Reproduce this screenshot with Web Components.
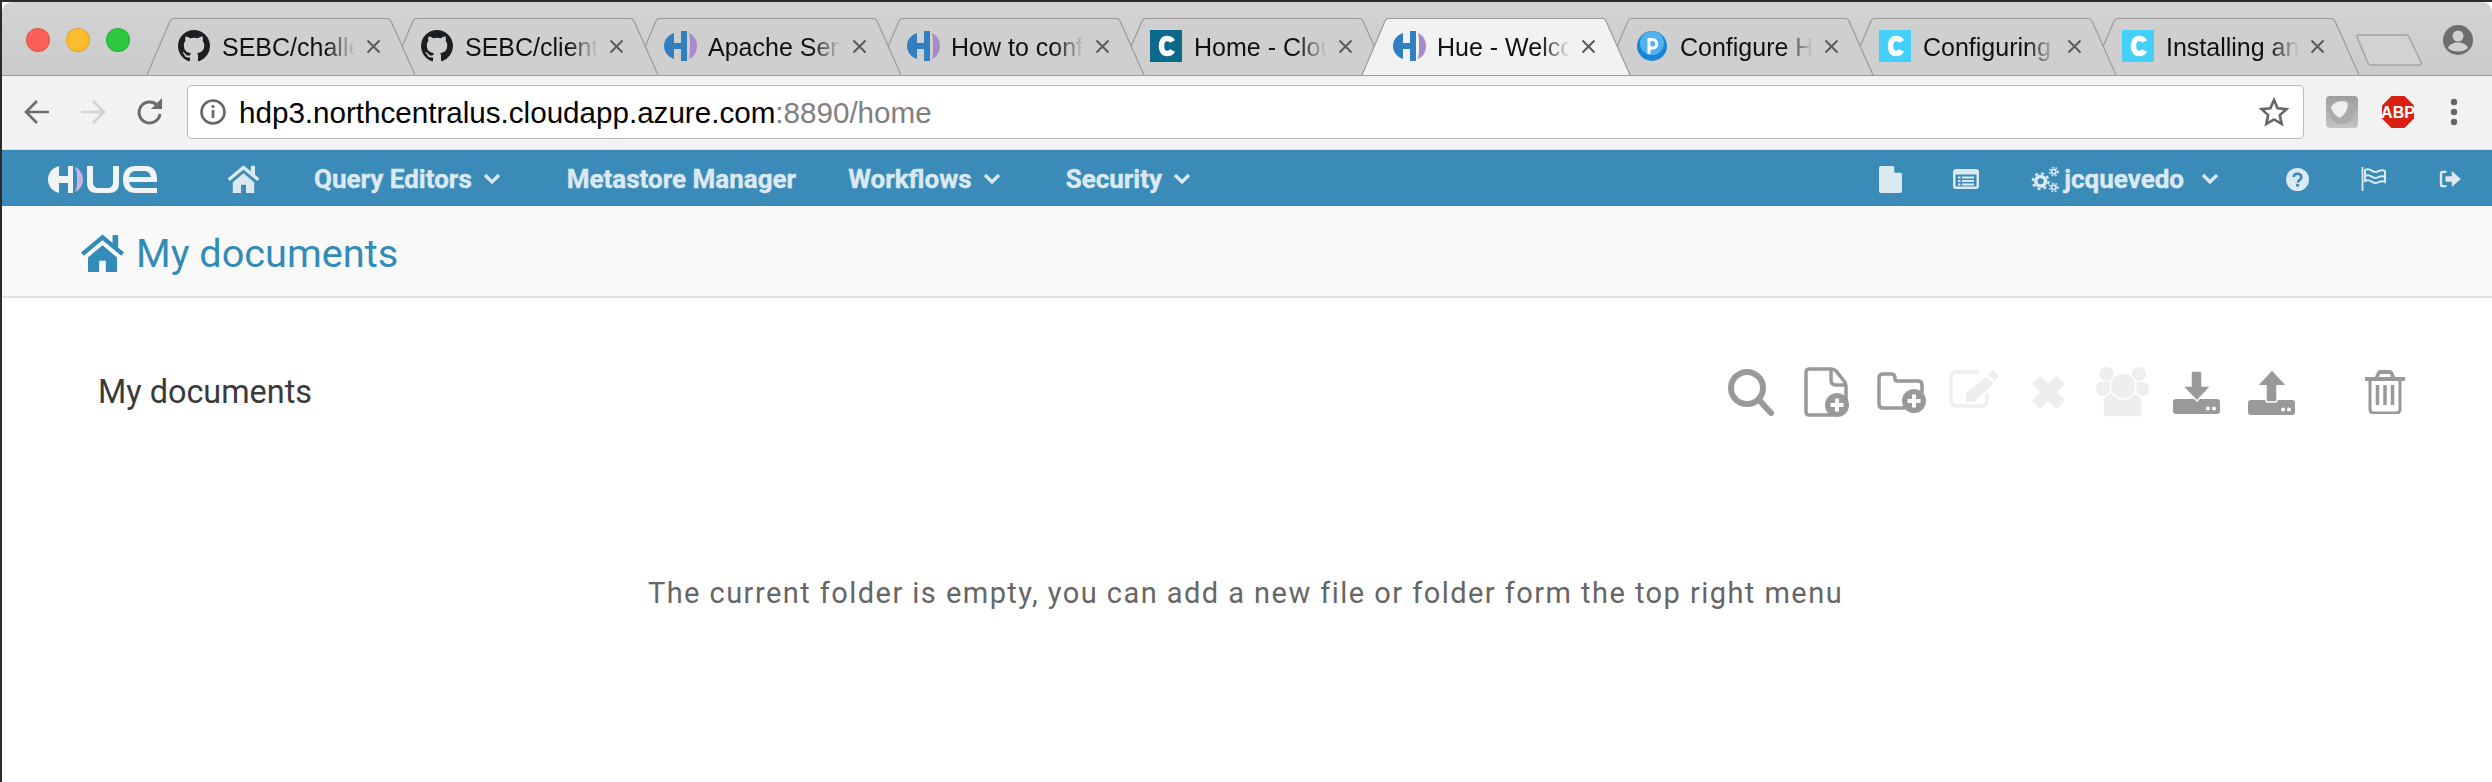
<!doctype html>
<html>
<head>
<meta charset="utf-8">
<title>Hue - Welcome</title>
<style>
  html, body { margin: 0; padding: 0; background: #fff; }
  body { width: 2492px; height: 782px; overflow: hidden; font-family: Roboto, "Liberation Sans", sans-serif; }
</style>
</head>
<body>
<browser-window>
  <browser-tabs>
    <browser-tab icon="github">SEBC/challenges</browser-tab>
    <browser-tab icon="github">SEBC/clients</browser-tab>
    <browser-tab icon="hue">Apache Sentry</browser-tab>
    <browser-tab icon="hue">How to configure</browser-tab>
    <browser-tab icon="cloudera">Home - Cloudera</browser-tab>
    <browser-tab icon="hue" active>Hue - Welcome</browser-tab>
    <browser-tab icon="p">Configure Hue</browser-tab>
    <browser-tab icon="c">Configuring Hue</browser-tab>
    <browser-tab icon="c">Installing and</browser-tab>
  </browser-tabs>
  <browser-toolbar host-name="hdp3.northcentralus.cloudapp.azure.com" rest=":8890/home"></browser-toolbar>
  <hue-nav></hue-nav>
  <page-title>My documents</page-title>
  <doc-panel heading="My documents">The current folder is empty, you can add a new file or folder form the top right menu</doc-panel>
</browser-window>

<script>
const letterC = `<path d="M22.500 11.500C21.500 9.500 19.500 8.500 17 8.500c-3.500 0-5.500 3-5.500 7.500s2 7.500 5.500 7.500c2.500 0 4.500-1 5.500-3" fill="none" stroke="#fff" stroke-width="5.500"/>`;

const ICONS = {
  github: `<svg viewBox="0 0 16 16" width="32" height="32"><path fill="#1b1f23" d="M8 0C3.58 0 0 3.58 0 8c0 3.54 2.29 6.53 5.47 7.59.4.07.55-.17.55-.38 0-.19-.01-.82-.01-1.49-2.01.37-2.53-.49-2.69-.94-.09-.23-.48-.94-.82-1.13-.28-.15-.68-.52-.01-.53.63-.01 1.08.58 1.23.82.72 1.21 1.87.87 2.33.66.07-.52.28-.87.51-1.07-1.78-.2-3.64-.89-3.64-3.95 0-.87.31-1.59.82-2.15-.08-.2-.36-1.02.08-2.12 0 0 .67-.21 2.2.82.64-.18 1.32-.27 2-.27s1.36.09 2 .27c1.53-1.04 2.2-.82 2.2-.82.44 1.1.16 1.92.08 2.12.51.56.82 1.27.82 2.15 0 3.07-1.87 3.75-3.65 3.95.29.25.54.73.54 1.48 0 1.07-.01 1.93-.01 2.2 0 .21.15.46.55.38A8.01 8.01 0 0 0 16 8c0-4.42-3.58-8-8-8z"/></svg>`,
  hue: `<svg viewBox="0 0 33 32" width="33" height="32"><path d="M10 3C4 5 0 10 0 16s4 11 10 13V19h7v12h6V1h-6v12h-7z" fill="#2f7fc1"/><path d="M25 3c5 2 8 7 8 13s-3 11-8 13c1-4 1-9 1-13s0-9-1-13z" fill="#a98bc9"/></svg>`,
  cloudera: `<svg viewBox="0 0 32 32" width="32" height="32"><rect width="32" height="32" fill="#0b6a8a"/>${letterC}</svg>`,
  p: `<svg viewBox="0 0 32 32" width="32" height="32"><circle cx="16" cy="16" r="15" fill="#1c86d6"/><circle cx="16" cy="13" r="12" fill="#4fb3f0"/><path d="M13 24V9.500h3.500a4.300 4.300 0 0 1 0 8.600H13" fill="none" stroke="#fff" stroke-width="3"/></svg>`,
  c: `<svg viewBox="0 0 32 32" width="32" height="32"><rect width="32" height="32" fill="#45d0fb"/>${letterC}</svg>`
};

class BrowserWindow extends HTMLElement {
  constructor() {
    super();
    this.attachShadow({ mode: 'open' }).innerHTML = `
      <style>
        :host { display: block; border-top: 2px solid #2b2b2b; border-left: 2px solid #2b2b2b; box-sizing: border-box; height: 782px; background: #fff; }
      </style>
      <slot></slot>`;
  }
}

class BrowserTabs extends HTMLElement {
  constructor() {
    super();
    this.attachShadow({ mode: 'open' }).innerHTML = `
      <style>
        :host { display: block; position: relative; height: 74px; box-sizing: border-box; background: linear-gradient(#d3d3d3, #cbcbcb); border-bottom: 1px solid #9b9b9b; border-radius: 10px 10px 0 0; }
        .row { display: flex; align-items: flex-end; height: 73px; padding-left: 144px; padding-right: 19px; box-sizing: border-box; }
        .lights { position: absolute; left: 24px; top: 26px; display: flex; gap: 16px; }
        .lights i { width: 24px; height: 24px; border-radius: 50%; box-sizing: border-box; border: 1px solid rgba(0,0,0,.12); }
        .new { flex: none; margin-left: 23px; margin-bottom: 9px; }
        .me { flex: none; margin-left: auto; margin-bottom: 20px; }
      </style>
      <div class="lights"><i style="background:#fc5f57"></i><i style="background:#fdbc2e"></i><i style="background:#2bc840"></i></div>
      <div class="row"><slot></slot>
        <svg class="new" width="66" height="32" viewBox="0 0 66 32"><path d="M3 1h47q2 0 3 2l12 25q1 3-2 3H15q-2 0-3-2L1 3q-1-2 2-2z" fill="#d2d2d2" stroke="#a3a3a3" stroke-width="1.500"/></svg>
        <svg class="me" width="30" height="30" viewBox="0 0 30 30"><circle cx="15" cy="15" r="15" fill="#6e6e6e"/><circle cx="15" cy="11" r="5.500" fill="#d0d0d0"/><path d="M5 23c1.500-4 6-5.500 10-5.500s8.500 1.500 10 5.500c-2.500 2.500-6 3.500-10 3.500S7.500 25.500 5 23z" fill="#d0d0d0"/></svg>
      </div>`;
  }
}

class BrowserTab extends HTMLElement {
  connectedCallback() {
    if (this.shadowRoot) return;
    const active = this.hasAttribute('active');
    const fill = active ? '#f2f2f2' : '#cfcfcf';
    // earlier tabs sit over later ones, the active one over all of them
    const order = 20 - Array.from(this.parentNode.children).indexOf(this);
    this.attachShadow({ mode: 'open' }).innerHTML = `
      <style>
        :host { display: block; position: relative; width: 270px; height: 57px; margin-right: -27px; flex: none; z-index: ${active ? 30 : order}; color: #111; font: 25px "Liberation Sans", Arial, sans-serif; }
        svg.shape { position: absolute; inset: 0; }
        .inner { position: relative; display: flex; align-items: center; height: 100%; padding: 0 0 0 32px; box-sizing: border-box; }
        .icon { flex: none; width: 33px; height: 32px; margin-right: 11px; margin-top: -2px; }
        .label { width: 133px; flex: none; overflow: hidden; white-space: nowrap; margin-top: 1px;
          -webkit-mask-image: linear-gradient(90deg, #000 78%, transparent 100%); mask-image: linear-gradient(90deg, #000 78%, transparent 100%); }
        .x { flex: none; margin-left: 11px; }
      </style>
      <svg class="shape" width="270" height="57" viewBox="0 0 270 57">
        <path d="M1 57 L24 3 Q25 0.500 28 0.500 H241 Q244 0.500 245 3 L269 57" fill="${fill}" stroke="#9b9b9b" stroke-width="1.200"/>
      </svg>
      <div class="inner">
        <span class="icon">${ICONS[this.getAttribute('icon')]}</span>
        <span class="label"><slot></slot></span>
        <svg class="x" width="15" height="15" viewBox="0 0 15 15"><path d="M1.500 1.500l12 12M13.500 1.500l-12 12" stroke="#5a5a5a" stroke-width="2"/></svg>
      </div>`;
  }
}

class BrowserToolbar extends HTMLElement {
  connectedCallback() {
    if (this.shadowRoot) return;
    this.attachShadow({ mode: 'open' }).innerHTML = `
      <style>
        :host { display: flex; align-items: center; height: 74px; box-sizing: border-box; background: #f2f2f2; border-bottom: 1px solid #dcdcdc; padding: 0 0 2px 22px; }
        .nav { display: flex; gap: 30px; align-items: center; width: 163px; flex: none; }
        .bar { width: 2117px; height: 54px; box-sizing: border-box; flex: none; background: #fff; border: 1.500px solid #b8b8b8; border-radius: 5px; display: flex; align-items: center; padding: 0 14px 0 12px; font: 29.600px "Liberation Sans", Arial, sans-serif; }
        .info { margin-right: 13px; flex: none; }
        .host { color: #000; padding-top: 2px; }
        .rest { color: #808080; padding-top: 2px; }
        .star { margin-left: auto; flex: none; }
        .ext { display: flex; align-items: center; margin-left: 22px; flex: none; }
      </style>
      <div class="nav">
        <svg width="26" height="26" viewBox="0 0 26 26"><path d="M25 13H3M13 2L2 13l11 11" fill="none" stroke="#6b6b6b" stroke-width="2.600"/></svg>
        <svg width="26" height="26" viewBox="0 0 26 26"><path d="M1 13h22M13 2l11 11-11 11" fill="none" stroke="#d4d4d4" stroke-width="2.600"/></svg>
        <svg width="28" height="30" viewBox="0 0 28 30"><path d="M24 17a10.500 10.500 0 1 1-3-9" fill="none" stroke="#6b6b6b" stroke-width="3"/><path d="M26 1v11H15z" fill="#6b6b6b"/></svg>
      </div>
      <div class="bar">
        <svg class="info" width="26" height="26" viewBox="0 0 26 26"><circle cx="13" cy="13" r="11.500" fill="none" stroke="#666" stroke-width="2.600"/><path d="M13 11v8" stroke="#666" stroke-width="2.600"/><circle cx="13" cy="7.500" r="1.600" fill="#666"/></svg>
        <span class="host">${this.getAttribute('host-name')}</span><span class="rest">${this.getAttribute('rest')}</span>
        <svg class="star" width="30" height="30" viewBox="0 0 30 30"><path d="M15 3l3.600 8.200 8.900.9-6.700 6 1.900 8.800L15 22.400l-7.700 4.500 1.900-8.800-6.700-6 8.900-.9z" fill="none" stroke="#666" stroke-width="2.600"/></svg>
      </div>
      <div class="ext">
        <svg width="32" height="32" viewBox="0 0 32 32"><defs><linearGradient id="g" x1="0" y1="0" x2="0" y2="1"><stop offset="0" stop-color="#9d9d9d"/><stop offset="1" stop-color="#c4c4c4"/></linearGradient></defs><rect width="32" height="32" rx="4" fill="url(#g)"/><circle cx="16" cy="16" r="12" fill="#aaa"/><path d="M5 11c3-5 10-7 16-5 2 5-1 12-7 16-4-2-8-6-9-11z" fill="#f0f0f0"/></svg>
        <svg style="margin-left:24px" width="32" height="32" viewBox="0 0 32 32"><path d="M9.500 0h13L32 9.500v13L22.500 32h-13L0 22.500v-13z" fill="#d81f12"/><text x="16" y="22" text-anchor="middle" font-family="Liberation Sans" font-weight="700" font-size="16" fill="#fff">ABP</text></svg>
        <svg style="margin-left:36px" width="8" height="28" viewBox="0 0 8 28"><circle cx="4" cy="4" r="3.200" fill="#666"/><circle cx="4" cy="14" r="3.200" fill="#666"/><circle cx="4" cy="24" r="3.200" fill="#666"/></svg>
      </div>`;
  }
}

const chevron = `<svg width="18" height="12" viewBox="0 0 18 12"><path d="M2 2l7 7 7-7" fill="none" stroke="currentColor" stroke-width="3.200"/></svg>`;
const homeShape = `<path d="M2 18L20 3l18 15" fill="none" stroke="currentColor" stroke-width="4"/><path d="M29 1h5v11h-5z" fill="currentColor"/><path d="M7 21L20 10l13 11v13H23V24h-6v10H7z" fill="currentColor"/>`;

class HueNav extends HTMLElement {
  constructor() {
    super();
    this.attachShadow({ mode: 'open' }).innerHTML = `
      <style>
        :host { display: flex; align-items: center; height: 56px; box-sizing: border-box; background: #3a8bb8; color: #dce9f2; font: 700 26px Roboto, sans-serif; -webkit-text-stroke: .4px #dce9f2; padding: 2px 31px 0 46px; }
        .logo { flex: none; margin-right: 70px; display: block; }
        .home { margin-right: 54px; flex: none; }
        .item { display: flex; align-items: center; gap: 11px; white-space: nowrap; }
        .left { display: flex; align-items: center; }
        .right { display: flex; align-items: center; margin-left: auto; }
        .user { display: flex; align-items: center; gap: 5px; }
      </style>
      <svg class="logo" width="109" height="27" viewBox="0 0 109 27">
        <path d="M11 0C4 2 0 7 0 13.500S4 25 11 27V17h9v10h5V0h-5v10h-9z" fill="#f1f4f7"/>
        <path d="M27 1c5 2 8 7 8 12.500S32 24 27 26c2-4 2-8 2-12.500S29 5 27 1z" fill="#c7b5e6"/>
        <path d="M39 0h6v16c0 4 2 6 6 6h8c4 0 6-2 6-6V0h6v17c0 7-4 10-10 10H49c-6 0-10-3-10-10z" fill="#f1f4f7"/>
        <path fill-rule="evenodd" d="M109 27H88c-8 0-13-4-13-13.500S80 0 88 0h10c7 0 11 5 11 13v3H81c1 4 3 6 7 6h21zM81 11h22c-1-4-3-6-6-6H88c-4 0-6 2-7 6z" fill="#f1f4f7"/>
      </svg>
      <div class="left">
        <svg class="home" width="33" height="28" viewBox="0 0 40 34">${homeShape}</svg>
        <div class="item" style="margin-right:66px">Query Editors ${chevron}</div>
        <div class="item" style="margin-right:52px">Metastore Manager</div>
        <div class="item" style="margin-right:65px">Workflows ${chevron}</div>
        <div class="item">Security ${chevron}</div>
      </div>
      <div class="right">
        <svg style="margin-right:51px" width="23" height="27" viewBox="0 0 24 28"><path d="M2 0h13l9 8v18a2 2 0 0 1-2 2H2a2 2 0 0 1-2-2V2a2 2 0 0 1 2-2z" fill="currentColor"/><path d="M16 0v7h8z" fill="#3a8bb8"/></svg>
        <svg style="margin-right:52px" width="26" height="20" viewBox="0 0 26 20"><path fill="currentColor" fill-rule="evenodd" d="M3 0h20a3 3 0 0 1 3 3v14a3 3 0 0 1-3 3H3a3 3 0 0 1-3-3V3a3 3 0 0 1 3-3zM2.500 5.500V17q0 .5.500.5h20q.5 0 .5-.5V5.500zM5 7.500h2.500v2H5zM9 7.500h12v2H9zM5 11h2.500v2H5zM9 11h12v2H9zM5 14.500h2.500v2H5zM9 14.500h12v2H9z"/></svg>
        <div class="user">
          <svg width="28" height="27" viewBox="0 0 32 30"><g fill="none" stroke="currentColor"><circle cx="11" cy="17" r="5.500" stroke-width="4"/><circle cx="11" cy="17" r="9" stroke-width="2.500" stroke-dasharray="3.500 3.600"/><circle cx="26" cy="6" r="2.500" stroke-width="2"/><circle cx="26" cy="6" r="4.800" stroke-width="1.800" stroke-dasharray="2 2"/><circle cx="26" cy="24" r="2.500" stroke-width="2"/><circle cx="26" cy="24" r="4.800" stroke-width="1.800" stroke-dasharray="2 2"/></g></svg>
          <span>jcquevedo</span>
          <span style="margin-left:12px;display:flex">${chevron}</span>
        </div>
        <svg style="margin:0 52px 0 67px" width="23" height="23" viewBox="0 0 24 24"><circle cx="12" cy="12" r="12" fill="currentColor"/><path d="M8 9.500c0-2.500 2-3.500 4-3.500s4 1.200 4 3.500c0 3-3.500 3-3.500 5.500" fill="none" stroke="#3a8bb8" stroke-width="2.800"/><rect x="10.500" y="16.500" width="3" height="3" fill="#3a8bb8"/></svg>
        <svg style="margin-right:53px" width="25" height="24" viewBox="0 0 25 24"><path d="M1.500 0v24" stroke="currentColor" stroke-width="1.800"/><path d="M4 3c5-3 8 3 11 2s6-3 9-1v11c-3-2-6 0-9 1s-6-5-11-2z" fill="none" stroke="currentColor" stroke-width="2"/><path d="M4 9c5-3 8 3 11 2s6-3 9-1" fill="none" stroke="currentColor" stroke-width="2"/></svg>
        <svg width="22" height="18" viewBox="0 0 24 20"><path d="M8 2H4Q2 2 2 4v12q0 2 2 2h4" fill="none" stroke="currentColor" stroke-width="2.600"/><path d="M7 7h7V1l10 9-10 9v-6H7z" fill="currentColor"/></svg>
      </div>`;
  }
}

class PageTitle extends HTMLElement {
  constructor() {
    super();
    this.attachShadow({ mode: 'open' }).innerHTML = `
      <style>
        :host { display: flex; align-items: center; height: 92px; box-sizing: border-box; background: #f9f9f9; border-bottom: 2px solid #dfdfdf; color: #338bb8; font: 39.700px Roboto, sans-serif; padding: 4px 0 0 78px; gap: 11px; }
      </style>
      <svg width="45" height="38" viewBox="0 0 40 34">${homeShape}</svg>
      <span><slot></slot></span>`;
  }
}

// width, height, colour, markup; sizes measured from the reference toolbar
const DOC_ICONS = [
  [46, 47, '#999', `<circle cx="19" cy="19" r="16" fill="none" stroke="currentColor" stroke-width="6"/><path d="M32 32l11 12" stroke="currentColor" stroke-width="6" stroke-linecap="round"/>`],
  [45, 50, '#999', `<path d="M6 2h21q3 0 5 2l8 10q2 3 2 5v20M2 5v40q0 3 3 3h24M2 5q0-3 4-3" fill="none" stroke="currentColor" stroke-width="3.500"/><path d="M27 2v11q0 5 5 5h10" fill="none" stroke="currentColor" stroke-width="3.500"/><circle cx="33" cy="38" r="12" fill="currentColor"/><path d="M33 31.500v13M26.500 38h13" stroke="#fff" stroke-width="4"/>`],
  [49, 41, '#999', `<path d="M2 6q0-4 4-4h8q4 0 4 4v1q0 2 2 2h21q4 0 4 4v8M28 36H6q-4 0-4-4V6" fill="none" stroke="currentColor" stroke-width="3.500"/><circle cx="37" cy="29" r="12" fill="currentColor"/><path d="M37 22.500v13M30.500 29h13" stroke="#fff" stroke-width="4"/>`],
  [50, 38, '#eee', `<path d="M30 2H8q-6 0-6 6v22q0 6 6 6h24q6 0 6-6v-7" fill="none" stroke="currentColor" stroke-width="3.500"/><path d="M17 32v-9L37 7l8 6-20 19zM39 5l4-4q1-1 2 0l4 4q1 1 0 2l-3 4z" fill="currentColor"/>`],
  [33, 33, '#eee', `<g transform="rotate(45 16.500 16.500)" fill="currentColor"><rect x="10.500" y="-1" width="12" height="35" rx="2"/><rect x="-1" y="10.500" width="35" height="12" rx="2"/></g>`],
  [53, 50, '#eee', `<circle cx="10.500" cy="7" r="7" fill="currentColor"/><circle cx="43" cy="7" r="7" fill="currentColor"/><rect x="0" y="15" width="18" height="14" rx="6" fill="currentColor"/><rect x="35" y="15" width="18" height="14" rx="6" fill="currentColor"/><path d="M7 50V36q0-9 8-10h23q8 1 8 10v14z" fill="currentColor" stroke="#fff" stroke-width="1.500"/><circle cx="27" cy="19" r="13" fill="currentColor" stroke="#fff" stroke-width="1.500"/>`],
  [47, 43, '#999', `<rect y="28" width="47" height="15" rx="3" fill="currentColor"/><path d="M18 2q0-2 2-2h7q2 0 2 2v13h9L24 30 9.500 15H18z" fill="currentColor" stroke="#fff" stroke-width="1.500"/><circle cx="35" cy="37.500" r="2" fill="#fff"/><circle cx="41" cy="37.500" r="2" fill="#fff"/>`],
  [47, 45, '#999', `<rect y="30" width="47" height="15" rx="3" fill="currentColor"/><path d="M24 0l14.500 15.500H29V30q0 2-2 2h-7q-2 0-2-2V15.500H9.500z" fill="currentColor" stroke="#fff" stroke-width="1.500"/><path d="M24 1l13 14H28v14q0 1-1 1h-6q-1 0-1-1V15H11z" fill="currentColor"/><circle cx="35" cy="39.500" r="2" fill="#fff"/><circle cx="41" cy="39.500" r="2" fill="#fff"/>`],
  [40, 44, '#999', `<path d="M0 7h40v4H0zM10 7l2-5q1-2 3-2h10q2 0 3 2l2 5h-4l-1-3H15l-1 3z" fill="currentColor"/><path d="M5 10v29q0 4 4 4h22q4 0 4-4V10" fill="none" stroke="currentColor" stroke-width="3"/><path d="M12.500 15v20M20 15v20M27.500 15v20" stroke="currentColor" stroke-width="3.500"/>`]
];

class DocPanel extends HTMLElement {
  connectedCallback() {
    if (this.shadowRoot) return;
    const gaps = [30, 28, 23, 33, 31, 24, 28, 70];
    const icons = DOC_ICONS.map(([w, h, c, body], i) =>
      `<svg style="color:${c};margin-right:${gaps[i] || 0}px${i === 3 ? ';margin-top:-6px' : ''}" width="${w}" height="${h}" viewBox="0 0 ${w} ${h}">${body}</svg>`).join('');
    this.attachShadow({ mode: 'open' }).innerHTML = `
      <style>
        :host { display: block; background: #fff; font-family: Roboto, sans-serif; }
        .head { display: flex; align-items: center; justify-content: space-between; height: 50px; margin-top: 69px; padding: 0 87px 0 96px; }
        h2 { margin: 0; font-size: 32.400px; font-weight: 400; color: #3a3a3a; }
        .tools { display: flex; align-items: center; }
        .empty { text-align: center; margin-top: 159px; padding-right: 3px; font-size: 29px; letter-spacing: 1.450px; color: #666; }
      </style>
      <div class="head"><h2>${this.getAttribute('heading')}</h2><div class="tools">${icons}</div></div>
      <div class="empty"><slot></slot></div>`;
  }
}

customElements.define('browser-window', BrowserWindow);
customElements.define('browser-tabs', BrowserTabs);
customElements.define('browser-tab', BrowserTab);
customElements.define('browser-toolbar', BrowserToolbar);
customElements.define('hue-nav', HueNav);
customElements.define('page-title', PageTitle);
customElements.define('doc-panel', DocPanel);
</script>
</body>
</html>
